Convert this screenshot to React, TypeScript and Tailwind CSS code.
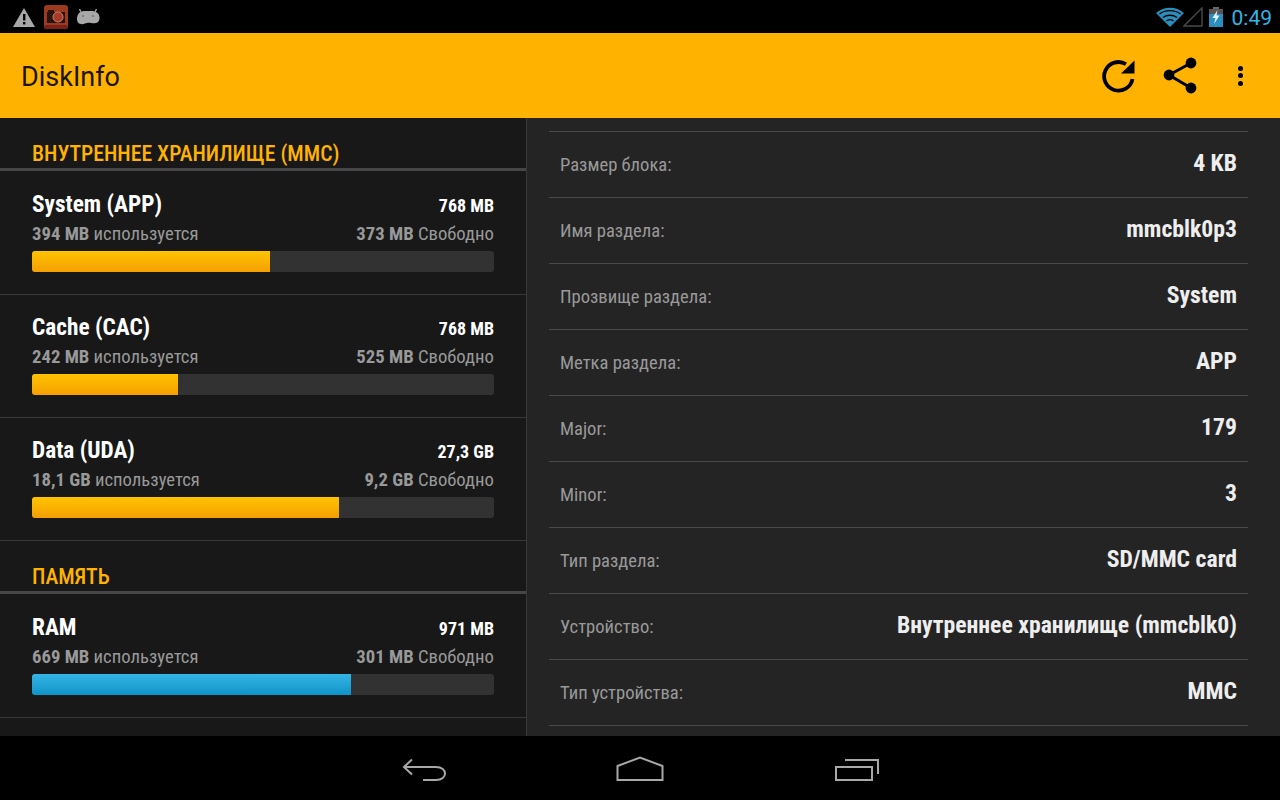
const usage = [
  { name: 'System (APP)', total: '768 MB', used: '394 MB', free: '373 MB', fill: 238 },
  { name: 'Cache (CAC)', total: '768 MB', used: '242 MB', free: '525 MB', fill: 146 },
  { name: 'Data (UDA)', total: '27,3 GB', used: '18,1 GB', free: '9,2 GB', fill: 307 },
];

const details = [
  ['Размер блока:', '4 KB'],
  ['Имя раздела:', 'mmcblk0p3'],
  ['Прозвище раздела:', 'System'],
  ['Метка раздела:', 'APP'],
  ['Major:', '179'],
  ['Minor:', '3'],
  ['Тип раздела:', 'SD/MMC card'],
  ['Устройство:', 'Внутреннее хранилище (mmcblk0)'],
  ['Тип устройства:', 'MMC'],
];

interface UsageRowProps {
  name: string;
  total: string;
  used: string;
  free: string;
  fill: number;
  barClass: string;
}

function UsageRow({ name, total, used, free, fill, barClass }: UsageRowProps) {
  return (
    <div className="h-[123px] shrink-0 border-b border-[#383838] pl-[32px] pr-[32px] pt-[18px]">
      <div className="flex h-[30px] items-center justify-between text-white">
        <span className="pb-[2px] text-[23.3px] font-bold">{name}</span>
        <span className="text-[18px] font-bold">{total}</span>
      </div>
      <div className="flex h-[29px] items-center justify-between text-[18.7px] text-[#999999]">
        <span><b className="font-bold">{used}</b> используется</span>
        <span><b className="font-bold">{free}</b> Свободно</span>
      </div>
      <div className="mt-[2px] h-[21px] overflow-hidden rounded-[3px] bg-[#323232]">
        <div className={`h-full ${barClass}`} style={{ width: fill }} />
      </div>
    </div>
  );
}

function SectionHeader({ title }: { title: string }) {
  return (
    <div className="flex h-[54px] shrink-0 flex-col justify-end">
      <div className="pb-[2px] pl-[32px] text-[21.7px] font-medium leading-[24px] text-[#ffb300]">{title}</div>
      <div className="h-[3px] bg-[#464646]" />
      <div className="h-px" />
    </div>
  );
}

export default function App() {
  return (
    <div className="flex h-[800px] w-[1280px] flex-col overflow-hidden bg-black font-['Roboto_Condensed','Roboto',sans-serif] [font-stretch:75%]">
      {/* status bar */}
      <div className="flex h-[33px] shrink-0 items-center justify-between pl-[13px] pr-[8px]">
        <div className="flex items-center">
          <svg width="22" height="20" viewBox="0 0 22 20">
            <path d="M11 1 L22 20 H0 Z" fill="#a8a8a8" />
            <rect x="10" y="7" width="2.4" height="6.5" fill="#000" />
            <rect x="10" y="15" width="2.4" height="2.4" fill="#000" />
          </svg>
          <svg className="ml-[9px]" width="24" height="24" viewBox="0 0 24 24">
            <rect width="24" height="24" rx="3" fill="#9c3a20" />
            <rect y="20" width="24" height="4" rx="2" fill="#7a2018" />
            <rect x="3" y="7" width="18" height="11" fill="#2a1410" />
            <rect x="4" y="5" width="6" height="2" fill="#2a1410" />
            <circle cx="14" cy="12" r="5" fill="#a83c28" stroke="#c9806c" strokeWidth="1" />
          </svg>
          <svg className="ml-[8px]" width="24" height="18" viewBox="0 0 24 18">
            <path d="M5 4 L3.5 1 M19 4 L20.5 1" stroke="#a8a8a8" strokeWidth="1.4" />
            <path d="M1 11 C1 5 5 3 9 3 H15 C20 3 23.500 5 23.500 10 C23.500 15 19 16 15 15 C13 14.500 11 14.500 9 15.500 C5 17 1 16 1 11 Z" fill="#a8a8a8" />
            <circle cx="7" cy="8" r="1.1" fill="#777" />
            <circle cx="17" cy="8" r="1.1" fill="#777" />
          </svg>
        </div>
        <div className="flex items-center">
          <svg width="28" height="20" viewBox="0 0 28 20">
            <path d="M14 20 L0 6 C8 -1 20 -1 28 6 Z" fill="#2a8fbd" />
            <path d="M3.500 7 C9 2.500 19 2.500 24.500 7 M7 10.500 C11 7.500 17 7.500 21 10.500 M10.500 14 C12.500 12.500 15.500 12.500 17.500 14" stroke="#000" strokeWidth="1.3" fill="none" />
          </svg>
          <svg className="ml-[-1px]" width="20" height="20" viewBox="0 0 20 20">
            <path d="M1 19 L19 1 V19 Z" fill="none" stroke="#4a4a4a" strokeWidth="1.4" />
          </svg>
          <svg className="ml-[6px]" width="14" height="20" viewBox="0 0 14 20">
            <rect x="4" y="0" width="6" height="2" fill="#666" />
            <rect x="0" y="2" width="14" height="5" fill="#555" />
            <rect x="0" y="7" width="14" height="13" fill="#2a8fbd" />
            <path d="M8.500 3 L3.500 11 H6.500 L5 17 L10.500 8.500 H7.500 Z" fill="#e8f4fa" />
          </svg>
          <span className="ml-[9px] pt-[3px] font-['Roboto',sans-serif] text-[21px] leading-none text-[#33b5e5] [font-stretch:100%]">0:49</span>
        </div>
      </div>

      {/* action bar */}
      <div className="flex h-[85px] shrink-0 items-center justify-between bg-[#ffb300] pl-[21px]">
        <span className="mt-[4px] font-['Roboto',sans-serif] text-[27px] text-[#1c1500] [font-stretch:100%]">DiskInfo</span>
        <div className="flex items-center">
          <svg width="34" height="34" viewBox="0 0 34 34">
            <path d="M30.500 20 A14.300 14.300 0 1 1 24 5.200" fill="none" stroke="#000" strokeWidth="3.800" />
            <path d="M19 14.500 H32.500 V1.500 Z" fill="#000" />
          </svg>
          <svg width="34" height="38" viewBox="0 0 34 38" className="ml-[27px]">
            <path d="M28 6 L6 18 L28 31" fill="none" stroke="#000" strokeWidth="3" />
            <circle cx="28" cy="6" r="5.400" fill="#000" />
            <circle cx="6" cy="18" r="5.400" fill="#000" />
            <circle cx="28" cy="31" r="5.400" fill="#000" />
          </svg>
          <div className="ml-[41px] mr-[37px] flex flex-col gap-[2.5px]">
            <div className="h-[5px] w-[5px] rounded-full bg-black" />
            <div className="h-[5px] w-[5px] rounded-full bg-black" />
            <div className="h-[5px] w-[5px] rounded-full bg-black" />
          </div>
        </div>
      </div>

      {/* content */}
      <div className="flex min-h-0 flex-1">
        <div className="flex w-[527px] shrink-0 flex-col overflow-hidden border-r border-[#383838] bg-[#181818]">
          <SectionHeader title="ВНУТРЕННЕЕ ХРАНИЛИЩЕ (MMC)" />
          {usage.map((row) => (
            <UsageRow key={row.name} {...row} barClass="bg-gradient-to-b from-[#ffc400] to-[#f59f00]" />
          ))}
          <SectionHeader title="ПАМЯТЬ" />
          <UsageRow name="RAM" total="971 MB" used="669 MB" free="301 MB" fill={319} barClass="bg-gradient-to-b from-[#33b5e5] to-[#0c94c8]" />
        </div>
        <div className="min-w-0 flex-1 overflow-hidden bg-[#242424] pl-[22px] pr-[32px] pt-[13px]">
          {details.map(([label, value]) => (
            <div key={label} className="flex h-[66px] items-center justify-between border-t border-[#4a4a4a] px-[11px]">
              <span className="pt-[2px] text-[18.6px] text-[#999999]">{label}</span>
              <span className="pb-[2px] text-[23.7px] font-bold text-[#eeeeee]">{value}</span>
            </div>
          ))}
          <div className="border-t border-[#4a4a4a]" />
        </div>
      </div>

      {/* nav bar */}
      <div className="flex h-[64px] shrink-0 items-start justify-center pt-[20px]">
        <svg width="46" height="26" viewBox="0 0 46 26" className="ml-[2px] mt-[1px]">
          <path d="M10 2.500 L2 10 L10 17.500 M2 10 H34 C46 10 46 23 34 23 H21" fill="none" stroke="#a8a8a8" strokeWidth="2" />
        </svg>
        <svg width="48" height="26" viewBox="0 0 48 26" className="ml-[168px]">
          <path d="M1.500 10 L24 1.500 L46.500 10 V24 H1.500 Z" fill="none" stroke="#a8a8a8" strokeWidth="2" />
        </svg>
        <svg width="46" height="25" viewBox="0 0 46 25" className="ml-[170px] mt-[1px]">
          <path d="M11 3 H44 V17" fill="none" stroke="#a8a8a8" strokeWidth="2" />
          <rect x="2" y="10" width="36" height="13" fill="none" stroke="#a8a8a8" strokeWidth="2" />
        </svg>
      </div>
    </div>
  );
}
